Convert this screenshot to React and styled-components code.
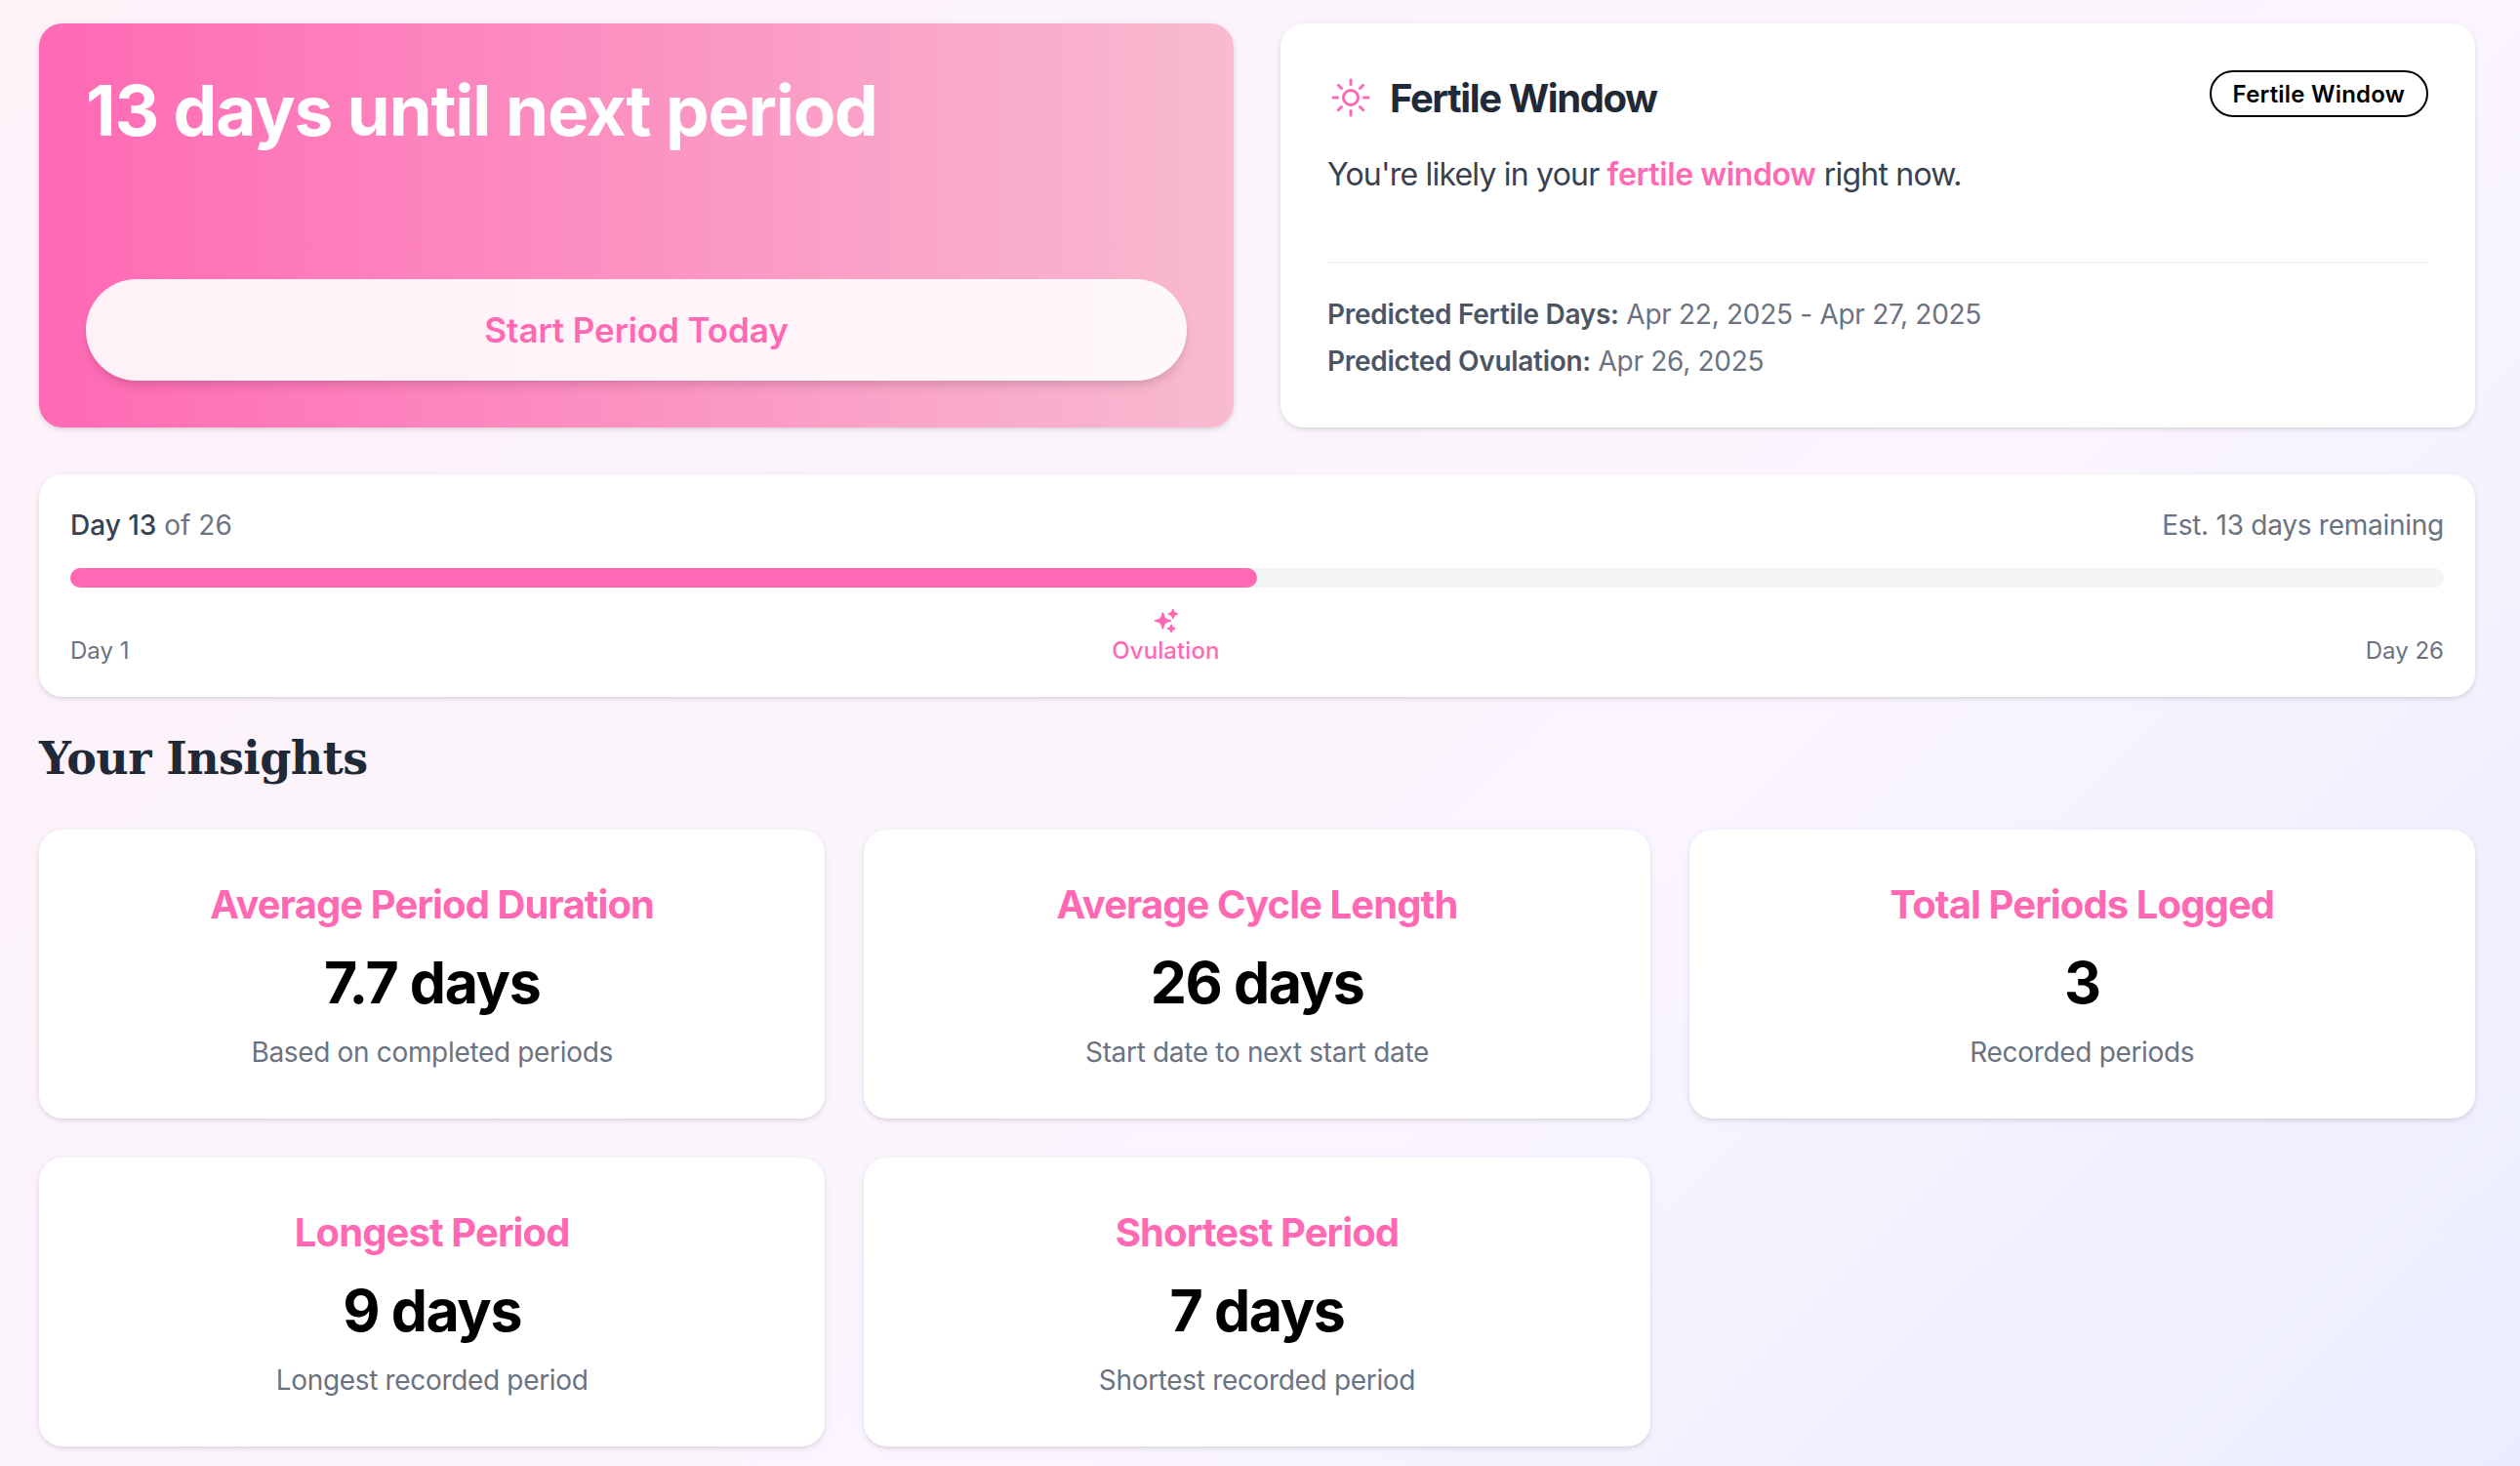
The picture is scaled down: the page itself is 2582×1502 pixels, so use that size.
import React from "react";
import styled, { createGlobalStyle } from "styled-components";
import { HiOutlineSun, HiSparkles } from "react-icons/hi2";

const PINK = "#ff69b4";

const GlobalStyle = createGlobalStyle`
  *, *::before, *::after { box-sizing: border-box; }
  body {
    margin: 0;
    font-family: Inter, "Liberation Sans", sans-serif;
    -webkit-font-smoothing: antialiased;
  }
  h1, h2, h3, p { margin: 0; }
`;

const Page = styled.main`
  width: 100%;
  min-height: 1502px;
  padding: 24px 46px 20px 40px;
  background: linear-gradient(135deg, #fdf2f8 0, #faf5ff 1826px, #e0e7ff 3652px);
`;

const Card = styled.section`
  border-radius: 24px;
  background: #fff;
  box-shadow: 0 2px 6px rgba(0, 0, 0, 0.1), 0 2px 4px -2px rgba(0, 0, 0, 0.1);
`;

const TopGrid = styled.div`
  display: grid;
  grid-template-columns: 1fr 1fr;
  gap: 48px;
  height: 414px;
`;

const HeroCard = styled(Card)`
  display: flex;
  flex-direction: column;
  justify-content: space-between;
  padding: 48px;
  background: linear-gradient(to right, ${PINK}, #f8bbd0);
`;

const HeroTitle = styled.h1`
  color: #fff;
  font-size: 71px;
  line-height: 82px;
  font-weight: 700;
  letter-spacing: -1.22px;
`;

const StartButton = styled.button`
  height: 104px;
  border: 0;
  border-radius: 52px;
  background: rgba(255, 255, 255, 0.9);
  box-shadow: 0 8px 12px -2px rgba(0, 0, 0, 0.1), 0 4px 8px -4px rgba(0, 0, 0, 0.1);
  color: ${PINK};
  font-family: inherit;
  font-size: 35px;
  font-weight: 600;
  letter-spacing: -0.1px;
`;

const FertileCard = styled(Card)`
  display: flex;
  flex-direction: column;
  padding: 48px;
`;

const FertileHeader = styled.div`
  display: flex;
  align-items: flex-start;
  justify-content: space-between;
`;

const FertileTitle = styled.h2`
  display: flex;
  align-items: center;
  gap: 16px;
  color: #1f2937;
  font-size: 40px;
  line-height: 58px;
  font-weight: 700;
  letter-spacing: -1.4px;

  svg { margin-bottom: 2px; color: ${PINK}; }
`;

const Badge = styled.span`
  height: 48px;
  padding: 0 22px;
  border: 2px solid #000;
  border-radius: 24px;
  color: #000;
  font-size: 24px;
  line-height: 45px;
  font-weight: 600;
  letter-spacing: 0.2px;
`;

const Message = styled.p`
  margin-top: 21px;
  color: #374151;
  font-size: 32px;
  line-height: 56px;
  letter-spacing: -0.8px;
`;

const Highlight = styled.strong`
  color: ${PINK};
  font-weight: 600;
  letter-spacing: -0.4px;
`;

const Predictions = styled.div`
  display: grid;
  gap: 8px;
  margin-top: auto;
  padding-top: 32px;
  border-top: 2px solid #f3f4f6;
`;

const Prediction = styled.p`
  color: #6b7280;
  font-size: 28px;
  line-height: 40px;
  letter-spacing: -0.29px;

  strong { color: #4b5563; font-weight: 600; }
`;

const CycleCard = styled(Card)`
  margin-top: 48px;
  height: 228px;
  padding: 32px;
`;

const SplitRow = styled.div`
  display: flex;
  justify-content: space-between;
  color: #6b7280;
  font-size: 28px;
  line-height: 40px;
`;

const DayCount = styled.strong`
  color: #374151;
  font-weight: 500;
`;

const Remaining = styled.span`
  letter-spacing: -0.26px;
`;

const Track = styled.div`
  height: 20px;
  margin-top: 24px;
  border-radius: 10px;
  background: #f3f4f6;
`;

const Fill = styled.div`
  height: 100%;
  border-radius: 10px;
  background: ${PINK};
`;

const Scale = styled.div`
  position: relative;
  display: flex;
  align-items: flex-end;
  justify-content: space-between;
  height: 81px;
  color: #6b7280;
  font-size: 24px;
  line-height: 32px;
`;

const OvulationMarker = styled.div`
  position: absolute;
  bottom: 0;
  display: flex;
  flex-direction: column;
  align-items: center;
  gap: 1px;
  transform: translateX(-50%);
  color: ${PINK};
  font-weight: 500;
  letter-spacing: 0.1px;
`;

const SectionTitle = styled.h2`
  display: flex;
  align-items: center;
  height: 136px;
  padding-bottom: 10px;
  color: #1f2937;
  font-family: Georgia, "DejaVu Serif", serif;
  font-size: 46px;
  font-weight: 700;
  letter-spacing: -0.6px;
`;

const InsightGrid = styled.div`
  display: grid;
  grid-template-columns: repeat(3, 1fr);
  gap: 40px;
`;

const InsightCard = styled(Card)`
  height: 296px;
  padding: 48px;
  text-align: center;
`;

const InsightTitle = styled.h3`
  color: ${PINK};
  font-size: 40px;
  line-height: 58px;
  font-weight: 700;
  letter-spacing: -0.9px;
`;

const InsightValue = styled.p`
  margin: 15px 0 15px;
  color: #000;
  font-size: 59px;
  line-height: 72px;
  font-weight: 700;
  letter-spacing: -1.4px;
`;

const InsightNote = styled.p`
  color: #6b7280;
  font-size: 28px;
  line-height: 40px;
  letter-spacing: -0.33px;
`;

const cycle = { day: 13, length: 26, ovulationDay: 12 };

const insights = [
  { title: "Average Period Duration", value: "7.7 days", note: "Based on completed periods" },
  { title: "Average Cycle Length", value: "26 days", note: "Start date to next start date" },
  { title: "Total Periods Logged", value: "3", note: "Recorded periods" },
  { title: "Longest Period", value: "9 days", note: "Longest recorded period" },
  { title: "Shortest Period", value: "7 days", note: "Shortest recorded period" },
];

const percent = (day) => `${(day / cycle.length) * 100}%`;

export default function App() {
  return (
    <>
      <GlobalStyle />
      <Page>
        <TopGrid>
          <HeroCard>
            <HeroTitle>13 days until next period</HeroTitle>
            <StartButton>Start Period Today</StartButton>
          </HeroCard>
          <FertileCard>
            <FertileHeader>
              <FertileTitle>
                <HiOutlineSun size={48} />
                Fertile Window
              </FertileTitle>
              <Badge>Fertile Window</Badge>
            </FertileHeader>
            <Message>
              You're likely in your <Highlight>fertile window</Highlight> right now.
            </Message>
            <Predictions>
              <Prediction>
                <strong>Predicted Fertile Days:</strong> Apr 22, 2025 - Apr 27, 2025
              </Prediction>
              <Prediction>
                <strong>Predicted Ovulation:</strong> Apr 26, 2025
              </Prediction>
            </Predictions>
          </FertileCard>
        </TopGrid>

        <CycleCard>
          <SplitRow>
            <span>
              <DayCount>Day {cycle.day}</DayCount> of {cycle.length}
            </span>
            <Remaining>Est. 13 days remaining</Remaining>
          </SplitRow>
          <Track>
            <Fill style={{ width: percent(cycle.day) }} />
          </Track>
          <Scale>
            <span>Day 1</span>
            <OvulationMarker style={{ left: percent(cycle.ovulationDay) }}>
              <HiSparkles size={28} />
              Ovulation
            </OvulationMarker>
            <span>Day {cycle.length}</span>
          </Scale>
        </CycleCard>

        <SectionTitle>Your Insights</SectionTitle>
        <InsightGrid>
          {insights.map((item) => (
            <InsightCard key={item.title}>
              <InsightTitle>{item.title}</InsightTitle>
              <InsightValue>{item.value}</InsightValue>
              <InsightNote>{item.note}</InsightNote>
            </InsightCard>
          ))}
        </InsightGrid>
      </Page>
    </>
  );
}
